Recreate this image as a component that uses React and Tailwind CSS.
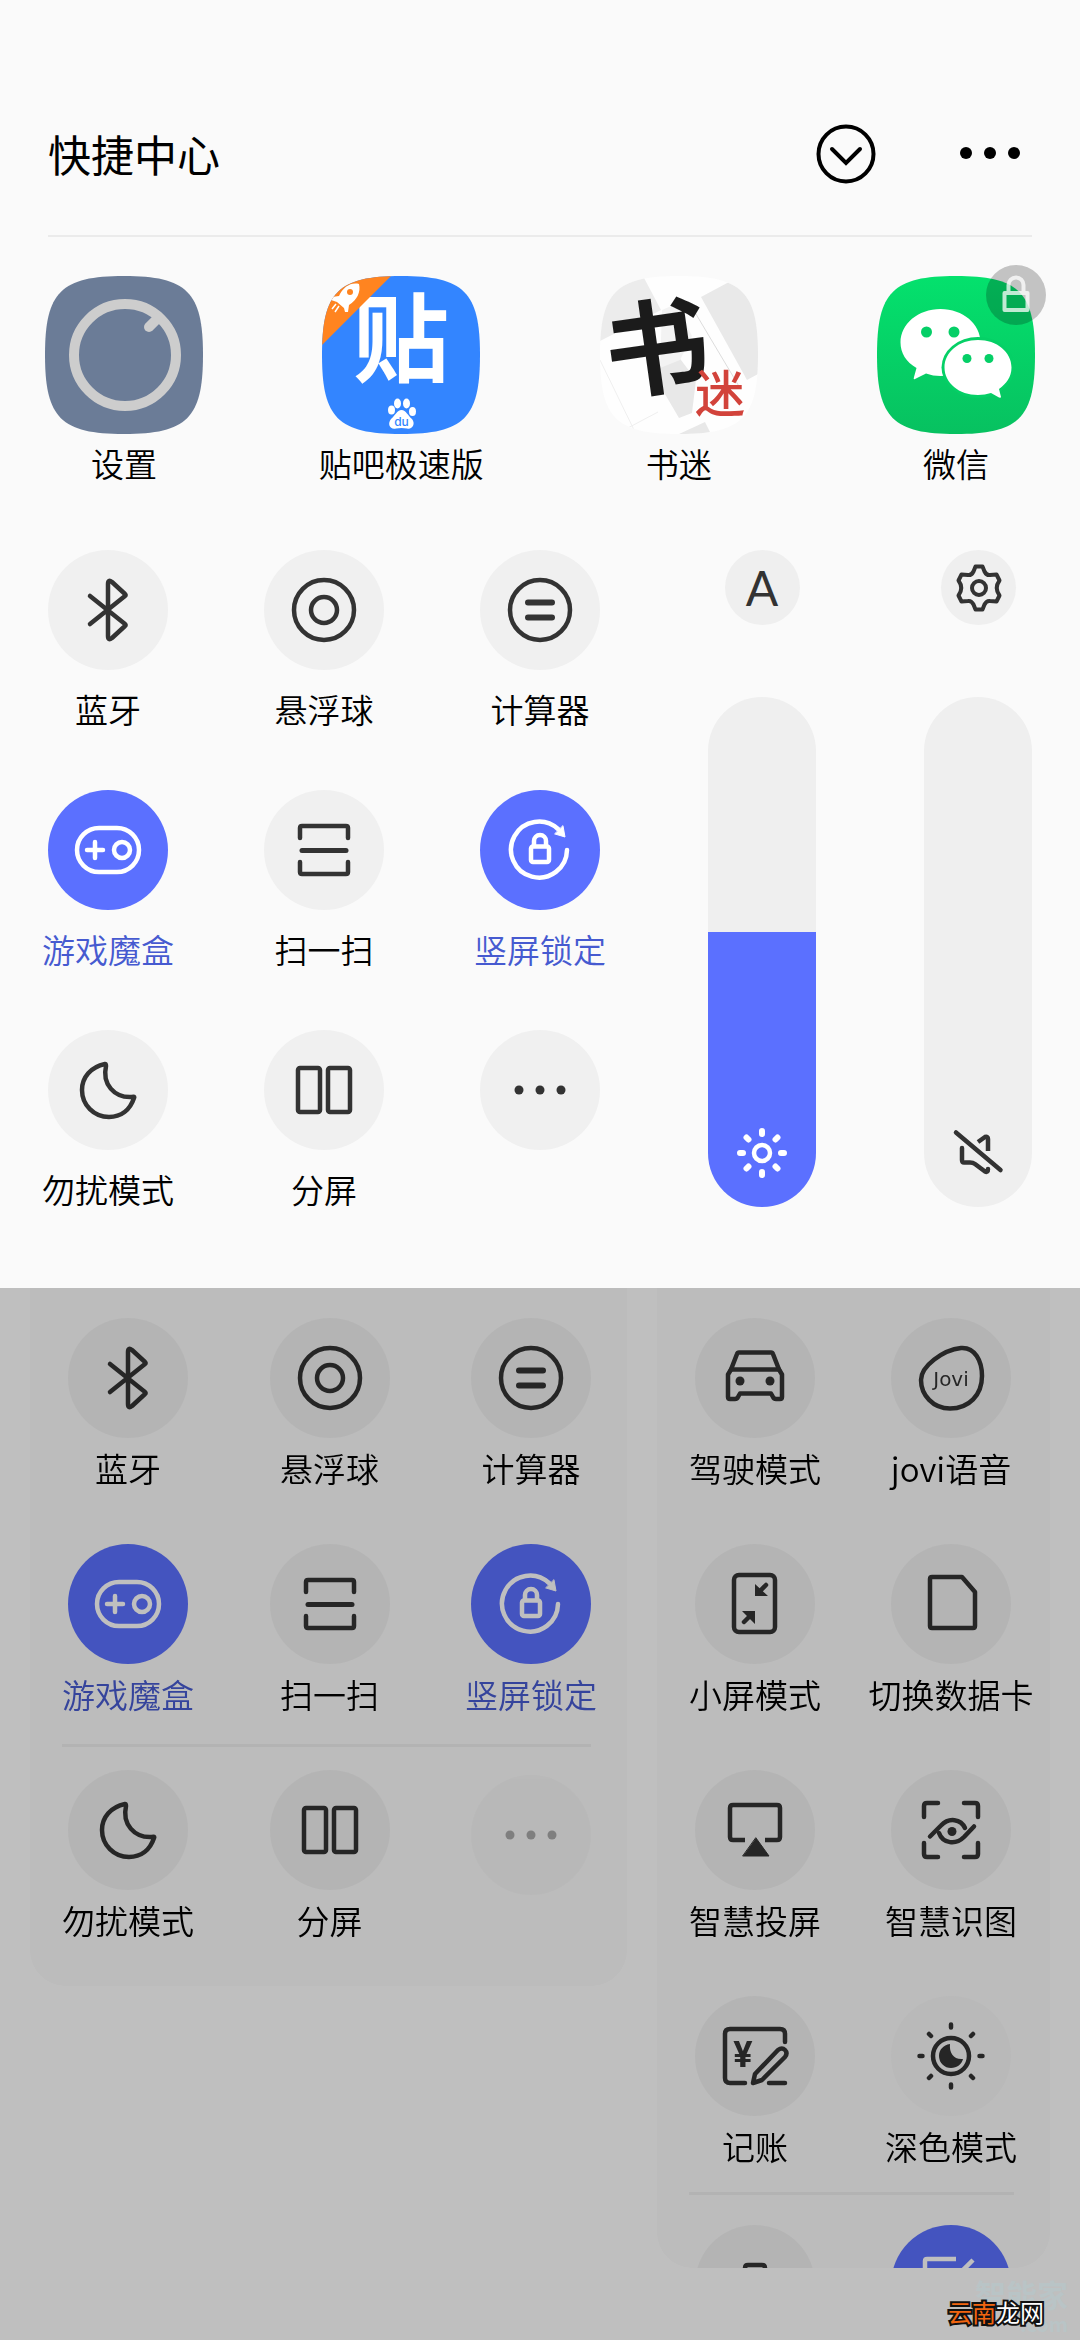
import { useState } from 'react';
import clsx from 'clsx';

const SQUIRCLE = 'M0 79C0 16 16 0 79 0S158 16 158 79 142 158 79 158 0 142 0 79Z';

const icons = {
    bluetooth: (
        <path d="M42 46L77 74Q78 75 77 76L64 88Q60 91 60 86V34Q60 29 64 32L77 44Q78 45 77 46L42 74" />
    ),
    ball: (
        <>
            <circle cx="60" cy="60" r="30" />
            <circle cx="60" cy="60" r="13" />
        </>
    ),
    calculator: (
        <>
            <circle cx="60" cy="60" r="30" />
            <path d="M48 52.5H72M48 67.5H72" strokeWidth="6" />
        </>
    ),
    game: (
        <>
            <rect x="29" y="38" width="62" height="44" rx="22" />
            <path d="M39 60H55M47 52V68" />
            <circle cx="74" cy="60" r="8" />
        </>
    ),
    scan: (
        <>
            <path d="M36 48V38Q36 36 38 36H82Q84 36 84 38V48" />
            <path d="M36 72V82Q36 84 38 84H82Q84 84 84 82V72" />
            <path d="M38 60.5H82" strokeWidth="5" />
        </>
    ),
    rotation: (
        <>
            <path d="M87 60A28 28 0 1 1 78 39" />
            <path d="M83 36L85 47L75 44Z" fill="currentColor" strokeWidth="1" />
            <rect x="51" y="56.5" width="18" height="15.5" rx="2" />
            <path d="M54 56V51a6 6 0 0 1 12 0V56" />
        </>
    ),
    moon: <path d="M57 34C43 37 34 47 34 60C34 75 46 87 61 87C73 87 82 80 86 68Q87 66 84 67C66 68 54 54 58 36Q58 34 57 34Z" />,
    split: (
        <>
            <rect x="34" y="38" width="22" height="44" rx="2" />
            <rect x="64" y="38" width="22" height="44" rx="2" />
        </>
    ),
    more: (
        <g fill="currentColor" stroke="none">
            <circle cx="39" cy="60" r="4.5" />
            <circle cx="60" cy="60" r="4.5" />
            <circle cx="81" cy="60" r="4.5" />
        </g>
    ),
    car: (
        <>
            <path d="M36 51.5L42 36Q42.5 34.5 44 34.5H76Q77.5 34.5 78 36L84 51.5L87 56.5V79Q87 81 85 81H81Q79 81 78 79L76 75.5H45L43 79Q42 81 40 81H35Q33 81 33 79V56.5Z" />
            <path d="M36 51.5H84" />
            <g fill="currentColor" stroke="none">
                <circle cx="45" cy="63" r="4.5" />
                <circle cx="75" cy="63" r="4.5" />
            </g>
        </>
    ),
    jovi: (
        <>
            <path d="M70 30C84 29 91 43 91 58C91 77 78 90.5 59 90.5C42 90.5 30 77 30 62C30 48 52 32 70 30Z" />
            <text x="60" y="68" textAnchor="middle" fontSize="20" fill="currentColor" stroke="none" className="font-['DejaVu_Sans']">
                Jovi
            </text>
        </>
    ),
    shrink: (
        <>
            <rect x="39" y="31" width="41" height="57" rx="5" />
            <path d="M71 41L63 49M49 78L57 70" />
            <path d="M60 40V52H73ZM60 80V67H47Z" fill="currentColor" stroke="none" />
        </>
    ),
    sim: <path d="M41 33H71L84 48V82Q84 84 82 84H41Q39 84 39 82V35Q39 33 41 33Z" />,
    cast: (
        <>
            <path d="M50 70H38Q35 70 35 67V38Q35 35 38 35H82Q85 35 85 38V67Q85 70 82 70H70" strokeLinecap="butt" />
            <path d="M61 68L74 86H48Z" fill="currentColor" strokeWidth="1" />
        </>
    ),
    recognize: (
        <>
            <path d="M33 47V36Q33 33 36 33H47M73 33H84Q87 33 87 36V47M87 73V84Q87 87 84 87H73M47 87H36Q33 87 33 84V73" />
            <path d="M39 66.5L50 55.5C58 47 70 49 74 58" />
            <path d="M48 63C52 74 65 75 73 67L83 56.5" />
            <circle cx="61" cy="61.5" r="4.5" fill="currentColor" stroke="none" />
        </>
    ),
    ledger: (
        <>
            <path d="M90 46V38Q90 33 85 33H35Q30 33 30 38V82Q30 87 35 87H50M74 87H90" />
            <text x="48" y="71" textAnchor="middle" fontSize="36" fill="currentColor" stroke="none" className="font-['Roboto'] font-bold">
                ¥
            </text>
            <path d="M58 87L60 78L83 54Q87 51 90 54Q93 57 90 61L67 84Z" />
        </>
    ),
    dark: (
        <>
            <circle cx="60" cy="60" r="18" />
            <path d="M60 28.5V31.5M60 88.5V91.5M28.5 60H31.5M88.5 60H91.5M38 38L40 40M80 80L82 82M82 38L80 40M40 80L38 82" />
            <path d="M59 48C52 49 48 54 48 60A12 12 0 0 0 60 72C66 72 71 68 72 63C63 64 58 57 59 48Z" fill="currentColor" stroke="none" />
        </>
    ),
    battery: <path d="M50 46V43Q50 40 53 40H67Q70 40 70 43V46M44 90V50Q44 46 48 46H72Q76 46 76 50V90" />,
    note: <path d="M65 34H36Q34 34 34 36V84H84V60M82 35L60 57" strokeLinecap="butt" />,
};

const mainTiles = [
    { icon: 'bluetooth', label: '蓝牙' },
    { icon: 'ball', label: '悬浮球' },
    { icon: 'calculator', label: '计算器' },
    { icon: 'game', label: '游戏魔盒', active: true },
    { icon: 'scan', label: '扫一扫' },
    { icon: 'rotation', label: '竖屏锁定', active: true },
];

const extraTiles = [
    { icon: 'moon', label: '勿扰模式' },
    { icon: 'split', label: '分屏' },
];

const toolTiles = [
    { icon: 'car', label: '驾驶模式' },
    { icon: 'jovi', label: 'jovi语音' },
    { icon: 'shrink', label: '小屏模式' },
    { icon: 'sim', label: '切换数据卡' },
    { icon: 'cast', label: '智慧投屏' },
    { icon: 'recognize', label: '智慧识图' },
    { icon: 'ledger', label: '记账' },
    { icon: 'dark', label: '深色模式', faint: true },
];

function Tile({ icon, label, active, faint, className, labelClass = 'mt-5' }) {
    return (
        <button type="button" aria-label={label || '更多'} className={clsx('flex w-[120px] flex-col items-center', className)}>
            <span
                className={clsx(
                    'flex size-[120px] rounded-full',
                    active ? 'bg-[#5b70ff] text-white' : 'text-[#333333]',
                    !active && (faint ? 'bg-[#f7f7f7]' : 'bg-[#f0f0f0]'),
                )}
            >
                <svg viewBox="0 0 120 120" className="size-full" fill="none" stroke="currentColor" strokeWidth="4.5" strokeLinecap="round" strokeLinejoin="round" aria-hidden="true">
                    {icons[icon]}
                </svg>
            </span>
            {label && (
                <span className={clsx('pb-0.5 text-[33px] leading-[38px] font-[350] whitespace-nowrap', labelClass, active ? 'text-[#465ad0]' : 'text-black')}>
                    {label}
                </span>
            )}
        </button>
    );
}

function AppShortcut({ label, badge, children }) {
    return (
        <a href="#" className="flex w-[158px] flex-col items-center gap-2.5">
            <span className="relative block size-[158px]">
                <svg viewBox="0 0 158 158" className="size-full overflow-visible" aria-hidden="true">
                    {children}
                </svg>
                {badge}
            </span>
            <span className="pb-0.5 text-[33px] leading-[38px] font-[350] whitespace-nowrap text-black">{label}</span>
        </a>
    );
}

function SettingsLogo() {
    return (
        <>
            <path d={SQUIRCLE} fill="#6b7c97" />
            <circle cx="80" cy="79" r="51" fill="none" stroke="#cdcdcd" strokeWidth="10" />
            <path d="M104 51L113 42" stroke="#cdcdcd" strokeWidth="10" strokeLinecap="round" />
        </>
    );
}

function TiebaLogo() {
    return (
        <>
            <clipPath id="tieba-clip">
                <path d={SQUIRCLE} />
            </clipPath>
            <path d={SQUIRCLE} fill="#3385ff" />
            <text x="79" y="98" textAnchor="middle" fontSize="96" fill="#fff" className="font-['Noto_Sans_CJK_SC'] font-bold">
                贴
            </text>
            <g clipPath="url(#tieba-clip)">
                <path d="M0 0H69L0 69Z" fill="#ff8420" />
                <path d="M37 8C29 6 21 11 17 20L10 21L9 24L15 26L22 32L23 36L26 36L27 29C35 24 39 16 37 8Z" fill="#fff" />
                <circle cx="28" cy="16" r="3" fill="#ff8420" />
                <path d="M14 28L10 33M17 30L13 36" stroke="#fff" strokeWidth="1.5" />
            </g>
            <g fill="#fff">
                <ellipse cx="69.5" cy="134" rx="3.5" ry="4.5" />
                <ellipse cx="75.5" cy="127.5" rx="3.5" ry="5" />
                <ellipse cx="84.5" cy="127.5" rx="3.5" ry="5" />
                <ellipse cx="90.5" cy="135.5" rx="3.5" ry="4.5" />
                <path d="M79.5 134C84 134 86 140 90 143C94 148 90 154 85 152.5Q79.5 151.5 74 152.5C68 154 65 148 69 143C73 140 75 134 79.5 134Z" />
            </g>
            <text x="79.5" y="150" textAnchor="middle" fontSize="12" fill="#3385ff" className="font-['Inter'] font-medium">
                du
            </text>
        </>
    );
}

function ShumiLogo() {
    return (
        <>
            <clipPath id="shumi-clip">
                <path d={SQUIRCLE} />
            </clipPath>
            <g clipPath="url(#shumi-clip)">
                <path d="M0 0H158V158H0Z" fill="#fefefe" />
                <path d="M0 0H43L61 34L0 65Z" fill="#ececec" />
                <path d="M101 21L129 6L158 0V98L147 104Z" fill="#e9e9e9" />
                <path d="M52 96L78 80L96 104L92 137L79 142ZM79 158L105 146L111 158Z" fill="#e8e8e8" />
                <path d="M62 34L76 28L92 60L80 84L60 92Z" fill="#f3f3f3" />
                <path d="M90 28L140 112" stroke="#dcdcdc" />
                <path d="M0 84L36 158M24 154L58 136" stroke="#efefef" />
            </g>
            <text textAnchor="middle" fontSize="104" fill="#1b1b1b" transform="translate(62 110) rotate(-8)" className="font-['Noto_Sans_CJK_SC'] font-bold">
                书
            </text>
            <text x="120" y="136" textAnchor="middle" fontSize="50" fill="#d2433b" className="font-['Noto_Sans_CJK_SC'] font-medium">
                迷
            </text>
        </>
    );
}

function WechatLogo() {
    return (
        <>
            <linearGradient id="wechat-bg" x1="0" y1="0" x2="0" y2="1">
                <stop offset="0" stopColor="#04e16d" />
                <stop offset="1" stopColor="#07c160" />
            </linearGradient>
            <path d={SQUIRCLE} fill="url(#wechat-bg)" />
            <path d="M63.5 33C86 33 103.5 48 103.5 66.5S86 100 63.5 100Q56 100 49 97.5L38 103Q36 104 37 101L39.5 92C29 86 23.5 77 23.5 66.5C23.5 48 41 33 63.5 33Z" fill="#fff" />
            <ellipse cx="101" cy="91.5" rx="36.5" ry="30.5" fill="#05d066" />
            <path d="M101 64C120 64 134.5 76 134.5 91.5C134.5 101 129 108 122 113L124 121Q124 122 122 121.5L114 117Q108 119 101 119C82 119 67.5 107 67.5 91.5S82 64 101 64Z" fill="#fff" />
            <g fill="#05cf67">
                <circle cx="49.5" cy="56" r="5.5" />
                <circle cx="77" cy="56" r="5.5" />
                <circle cx="90" cy="82.5" r="4.5" />
                <circle cx="112" cy="82.5" r="4.5" />
            </g>
        </>
    );
}

function LockBadge() {
    return (
        <span className="absolute -top-[11px] -right-[11px] size-[60px] rounded-full bg-black/22">
            <svg viewBox="0 0 60 60" className="size-full opacity-75" fill="none" stroke="#fff" strokeWidth="4" strokeLinejoin="round" aria-hidden="true">
                <rect x="18.5" y="28" width="23" height="17" />
                <path d="M22.5 27V20a7.5 7.5 0 0 1 15 0V27" />
            </svg>
        </span>
    );
}

function VerticalSlider({ label, initial, children }) {
    const [value, setValue] = useState(initial);

    return (
        <label className="relative flex h-[510px] w-[108px] flex-col justify-end overflow-hidden rounded-full bg-[#efefef]">
            <span className="block w-full bg-[#5b70ff]" style={{ height: `${value}%` }} />
            <svg viewBox="0 0 108 108" className="absolute bottom-0 left-0 w-full" fill="none" strokeLinecap="round" strokeLinejoin="round" aria-hidden="true">
                {children}
            </svg>
            <input
                type="range"
                aria-label={label}
                value={value}
                onChange={(e) => setValue(Number(e.target.value))}
                className="absolute inset-0 size-full opacity-0 [direction:rtl] [writing-mode:vertical-lr]"
            />
        </label>
    );
}

export default function App() {
    return (
        <div className="flex min-h-screen flex-col bg-[#c0c0c0] font-['Noto_Sans_CJK_SC',sans-serif]">
            <section className="bg-[#fafafa] px-12 pb-[78px]">
                <header className="flex items-center border-b-2 border-[#ebebeb] pt-[124px] pb-[51px]">
                    <h1 className="flex-1 pb-0.5 text-[43px] leading-[58px] text-black">快捷中心</h1>
                    <button type="button" aria-label="收起" className="mr-21">
                        <svg viewBox="0 0 60 60" className="size-[60px]" fill="none" stroke="#000" strokeWidth="4" strokeLinecap="round" aria-hidden="true">
                            <circle cx="30" cy="30" r="27.5" />
                            <path d="M16 25L30 39L44 25" />
                        </svg>
                    </button>
                    <button type="button" aria-label="更多" className="mr-3">
                        <svg viewBox="0 0 60 60" className="size-[60px]" aria-hidden="true">
                            <circle cx="6" cy="29" r="6" />
                            <circle cx="30" cy="29" r="6" />
                            <circle cx="54" cy="29" r="6" />
                        </svg>
                    </button>
                </header>

                <nav className="-mx-[3px] flex justify-between pt-[39px]">
                    <AppShortcut label="设置"><SettingsLogo /></AppShortcut>
                    <AppShortcut label="贴吧极速版"><TiebaLogo /></AppShortcut>
                    <AppShortcut label="书迷"><ShumiLogo /></AppShortcut>
                    <AppShortcut label="微信" badge={<LockBadge />}><WechatLogo /></AppShortcut>
                </nav>

                <div className="mt-[66px] grid grid-cols-[552fr_324fr] gap-[108px]">
                    <div className="grid grid-cols-[repeat(3,120px)] content-start items-start justify-between gap-y-[60px]">
                        {[...mainTiles, ...extraTiles].map((tile) => (
                            <Tile key={tile.icon} {...tile} />
                        ))}
                        <Tile icon="more" />
                    </div>

                    <div className="flex justify-between">
                        <div className="flex flex-col items-center gap-18">
                            <button type="button" aria-label="自动亮度" className="flex size-[75px] items-center justify-center rounded-full bg-[#efefef] font-['Lato'] text-5xl leading-none text-[#333333]">
                                A
                            </button>
                            <VerticalSlider label="亮度" initial={54}>
                                <g stroke="#fff">
                                    <circle cx="54" cy="54" r="8" strokeWidth="4.5" />
                                    <path d="M54 32V35M54 73V76M32 54H35M73 54H76M38.5 38.5L40.5 40.5M67.5 67.5L69.5 69.5M69.5 38.5L67.5 40.5M40.5 67.5L38.5 69.5" strokeWidth="6" />
                                </g>
                            </VerticalSlider>
                        </div>
                        <div className="flex flex-col items-center gap-18">
                            <button type="button" aria-label="声音设置" className="size-[75px] rounded-full bg-[#efefef] text-[#333333]">
                                <svg viewBox="0 0 75 75" className="size-full" fill="none" stroke="currentColor" strokeWidth="4" strokeLinejoin="round" aria-hidden="true">
                                    <path d="M34.5 16.5H41.5L43.5 21.5Q45.5 25.5 49 25L55.5 24.5L58.5 30.5Q53 38 58.5 45.5L55.5 51.5L49 51Q45.5 50.5 43.5 54.5L41.5 59.5H34.5L32.5 54.5Q30.5 50.5 27 51L20.5 51.5L17.5 45.5Q23 38 17.5 30.5L20.5 24.5L27 25Q30.5 25.5 32.5 21.5Z" />
                                    <circle cx="38" cy="38" r="7" />
                                </svg>
                            </button>
                            <VerticalSlider label="音量" initial={0}>
                                <g stroke="#333" strokeWidth="4.5">
                                    <path d="M32 33.5L76.5 71" />
                                    <path d="M38 49V61Q38 63.5 40 63.5H46Q49 63.5 51 65L61 72.5Q64 74 64 70" />
                                    <path d="M54 43L61 38Q64 37 64 40V52" strokeLinecap="butt" />
                                </g>
                            </VerticalSlider>
                        </div>
                    </div>
                </div>
            </section>

            <section className="grid flex-1 grid-cols-[597fr_393fr] items-start gap-[30px] bg-white px-[30px] pb-[72px] brightness-75">
                <div className="rounded-b-[36px] bg-[#fafafa] pt-[30px] pr-9 pb-[45px] pl-8">
                    <div className="grid grid-cols-[repeat(3,120px)] justify-between gap-y-[55px] pl-1.5">
                        {mainTiles.map((tile) => (
                            <Tile key={tile.icon} {...tile} labelClass="mt-[11px]" />
                        ))}
                    </div>
                    <hr className="mt-[29px] mb-[23px] border-t-3 border-[#efefee]" />
                    <div className="grid grid-cols-[repeat(3,120px)] items-start justify-between pl-1.5">
                        {extraTiles.map((tile) => (
                            <Tile key={tile.icon} {...tile} labelClass="mt-[11px]" />
                        ))}
                        <Tile icon="more" className="mt-[5px] opacity-40" />
                    </div>
                </div>

                <div className="h-[980px] overflow-hidden rounded-b-[36px] bg-[#fafafa] pt-[30px] pr-9 pl-8">
                    <div className="grid grid-cols-[repeat(2,120px)] justify-between gap-y-[55px] pr-[3px] pl-1.5">
                        {toolTiles.map((tile) => (
                            <Tile key={tile.icon} {...tile} labelClass="mt-[11px]" />
                        ))}
                    </div>
                    <hr className="mt-[25px] mb-[30px] border-t-3 border-[#efeeee]" />
                    <div className="grid grid-cols-[repeat(2,120px)] justify-between pr-[3px] pl-1.5">
                        <Tile icon="battery" />
                        <Tile icon="note" active />
                    </div>
                </div>
            </section>

            <div className="pointer-events-none absolute right-3 bottom-1 flex flex-col items-end font-bold text-[#b9c4c6]">
                <span className="text-[31px] leading-9">智能家</span>
                <span className="text-xl leading-6">.com</span>
            </div>
            <div className="pointer-events-none absolute right-9 bottom-3 text-2xl leading-8 text-white [paint-order:stroke] [-webkit-text-stroke:4px_#111]">
                <span className="text-[#f26510]">云南</span>龙网
            </div>
        </div>
    );
}
